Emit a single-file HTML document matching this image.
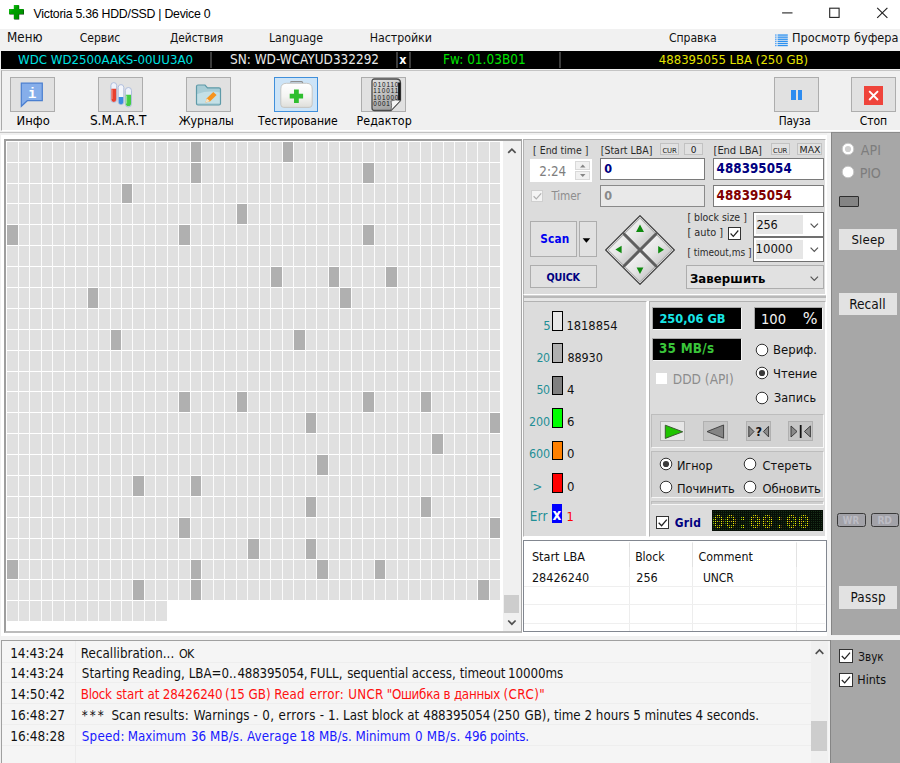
<!DOCTYPE html>
<html lang="ru"><head><meta charset="utf-8"><title>Victoria 5.36 HDD/SSD | Device 0</title>
<style>
html,body{margin:0;padding:0}
body{width:900px;height:763px;overflow:hidden;background:#f0f0f0;position:relative;font-family:'DejaVu Sans Condensed','DejaVu Sans',sans-serif;}
.b{position:absolute;box-sizing:border-box;display:block}
.t{position:absolute;white-space:pre;line-height:normal;margin:0;padding:0}
.btn{background:#e1e1e1;border:1px solid #adadad}
.pan{background:#dcdcdc;border:1px solid;border-color:#b2b2b2 #fff #fff #b2b2b2}
</style></head>
<body>
<div class="b" style="left:0px;top:0px;width:900px;height:29px;background:#fff;"></div>
<svg class="b" style="left:8px;top:4px;" width="18" height="17" viewBox="0 0 18 17"><defs><linearGradient id="gp" x1="0" y1="0" x2="1" y2="1"><stop offset="0" stop-color="#22d822"/><stop offset="0.35" stop-color="#00a000"/><stop offset="1" stop-color="#008a00"/></linearGradient></defs>
<path d="M6.200 1.500h5v4h4.800v5h-4.800v5h-5v-5h-4.800v-5h4.800z" fill="#062a06"/>
<path d="M5.800 1.100h5v4h4.800v5h-4.800v5h-5v-5h-4.800v-5h4.800z" fill="url(#gp)"/></svg>
<span class="t" style="font-family:'Liberation Sans',sans-serif;font-size:12.32px;color:#000;left:33.6px;top:6.6px;letter-spacing:-0.26px;">Victoria 5.36 HDD/SSD | Device 0</span>
<svg class="b" style="left:775px;top:0px;" width="125" height="29" viewBox="0 0 125 29"><path d="M7.1 12.9h10.4" stroke="#222" stroke-width="1.1" fill="none"/>
<rect x="54.7" y="8.2" width="9.4" height="9.2" stroke="#222" stroke-width="1.1" fill="none"/>
<path d="M102.2 7.9l10.2 10M112.4 7.9l-10.200 10" stroke="#222" stroke-width="1.15" fill="none"/></svg>
<div class="b" style="left:0px;top:29px;width:900px;height:21.6px;background:#f1f1f1;"></div>
<span class="t" style="font-family:'DejaVu Sans Condensed','DejaVu Sans',sans-serif;font-size:13.27px;color:#111;left:7px;top:30.4px;letter-spacing:0.02px;">Меню</span>
<span class="t" style="font-family:'DejaVu Sans Condensed','DejaVu Sans',sans-serif;font-size:12.12px;color:#111;left:79.7px;top:31.4px;letter-spacing:-0.03px;">Сервис</span>
<span class="t" style="font-family:'DejaVu Sans Condensed','DejaVu Sans',sans-serif;font-size:11.85px;color:#111;left:170px;top:31.4px;letter-spacing:-0.04px;">Действия</span>
<span class="t" style="font-family:'DejaVu Sans Condensed','DejaVu Sans',sans-serif;font-size:12.2px;color:#111;left:269px;top:31.4px;letter-spacing:-0.01px;">Language</span>
<span class="t" style="font-family:'DejaVu Sans Condensed','DejaVu Sans',sans-serif;font-size:12.28px;color:#111;left:369.7px;top:31.4px;letter-spacing:-0.01px;">Настройки</span>
<span class="t" style="font-family:'DejaVu Sans Condensed','DejaVu Sans',sans-serif;font-size:12.09px;color:#111;left:668.9px;top:31.4px;letter-spacing:-0.02px;">Справка</span>
<span class="t" style="font-family:'DejaVu Sans Condensed','DejaVu Sans',sans-serif;font-size:12.62px;color:#111;left:792px;top:30.4px;letter-spacing:0.01px;">Просмотр буфера</span>
<svg class="b" style="left:774.7px;top:34.2px;" width="13" height="13" viewBox="0 0 13 13"><rect x="0" y="0.4" width="1.6" height="1.3" fill="#5aa7f5"/><rect x="2.6" y="0.4" width="10.2" height="1.3" fill="#2b90f0"/><rect x="0" y="2.5" width="1.6" height="1.3" fill="#5aa7f5"/><rect x="2.6" y="2.5" width="10.2" height="1.3" fill="#2b90f0"/><rect x="0" y="4.6" width="1.6" height="1.3" fill="#5aa7f5"/><rect x="2.6" y="4.6" width="10.2" height="1.3" fill="#2b90f0"/><rect x="0" y="6.7" width="1.6" height="1.3" fill="#5aa7f5"/><rect x="2.6" y="6.7" width="10.2" height="1.3" fill="#2b90f0"/><rect x="0" y="8.8" width="1.6" height="1.3" fill="#5aa7f5"/><rect x="2.6" y="8.8" width="10.2" height="1.3" fill="#2b90f0"/><rect x="0" y="10.9" width="1.6" height="1.3" fill="#5aa7f5"/><rect x="2.6" y="10.9" width="10.2" height="1.3" fill="#2b90f0"/></svg>
<div class="b" style="left:1px;top:50.8px;width:899px;height:18.1px;background:#000;"></div>
<span class="t" style="font-family:'DejaVu Sans Condensed','DejaVu Sans',sans-serif;font-size:13.14px;color:#00e2e2;left:18px;top:51.7px;">WDC WD2500AAKS-00UU3A0</span>
<div class="b" style="left:209.9px;top:51.5px;width:1.7px;height:16.9px;background:#3c3c3c;"></div>
<div class="b" style="left:395.9px;top:51.5px;width:1.7px;height:16.9px;background:#3c3c3c;"></div>
<div class="b" style="left:409.2px;top:51.5px;width:1.7px;height:16.9px;background:#3c3c3c;"></div>
<div class="b" style="left:559.2px;top:51.5px;width:1.7px;height:16.9px;background:#3c3c3c;"></div>
<span class="t" style="font-family:'DejaVu Sans Condensed','DejaVu Sans',sans-serif;font-size:13.44px;color:#eaeaea;left:230px;top:51.7px;">SN: WD-WCAYUD332292</span>
<span class="t" style="font-family:'DejaVu Sans Condensed','DejaVu Sans',sans-serif;font-size:12.4px;color:#fff;font-weight:bold;left:399.35px;top:51.7px;">x</span>
<span class="t" style="font-family:'DejaVu Sans Condensed','DejaVu Sans',sans-serif;font-size:13.5px;color:#00e000;left:443px;top:50.7px;">Fw: 01.03B01</span>
<span class="t" style="font-family:'DejaVu Sans Condensed','DejaVu Sans',sans-serif;font-size:13.03px;color:#e4e400;left:658.8px;top:51.7px;">488395055 LBA (250 GB)</span>
<div class="b" style="left:1px;top:70.4px;width:899px;height:60.6px;background:#f0f0f0;border-left:1px solid #a9a9a9;border-top:1px solid #c4c4c4;border-bottom:1px solid #fff"></div>
<div class="b btn" style="left:10.3px;top:77.2px;width:44.7px;height:34.5px;"></div>
<div class="b btn" style="left:98.3px;top:77.2px;width:44.5px;height:34.5px;"></div>
<div class="b btn" style="left:186.3px;top:77.2px;width:44.7px;height:34.5px;"></div>
<div class="b btn" style="left:361.4px;top:77.2px;width:44.6px;height:34.5px;"></div>
<div class="b btn" style="left:773.8px;top:77.2px;width:44.9px;height:34.5px;"></div>
<div class="b btn" style="left:851.2px;top:77.2px;width:44.6px;height:34.5px;"></div>
<div class="b" style="left:273.6px;top:77.2px;width:44.8px;height:34.5px;background:#cde4f7;border:1.5px solid #3f8fdb"></div>
<span class="t" style="font-family:'DejaVu Sans Condensed','DejaVu Sans',sans-serif;font-size:12.85px;color:#000;left:16.5px;top:112.6px;letter-spacing:0.04px;">Инфо</span>
<span class="t" style="font-family:'DejaVu Sans Condensed','DejaVu Sans',sans-serif;font-size:13.47px;color:#000;left:90px;top:111.6px;letter-spacing:-0.07px;">S.M.A.R.T</span>
<span class="t" style="font-family:'DejaVu Sans Condensed','DejaVu Sans',sans-serif;font-size:12.28px;color:#000;left:178.7px;top:113.6px;letter-spacing:-0.03px;">Журналы</span>
<span class="t" style="font-family:'DejaVu Sans Condensed','DejaVu Sans',sans-serif;font-size:12.06px;color:#000;left:258px;top:113.6px;letter-spacing:-0.02px;">Тестирование</span>
<span class="t" style="font-family:'DejaVu Sans Condensed','DejaVu Sans',sans-serif;font-size:12.38px;color:#000;left:356.6px;top:113.6px;letter-spacing:-0.01px;">Редактор</span>
<span class="t" style="font-family:'DejaVu Sans Condensed','DejaVu Sans',sans-serif;font-size:11.72px;color:#000;left:778.7px;top:113.6px;letter-spacing:-0.16px;">Пауза</span>
<span class="t" style="font-family:'DejaVu Sans Condensed','DejaVu Sans',sans-serif;font-size:12.09px;color:#000;left:859.7px;top:113.6px;letter-spacing:-0.09px;">Стоп</span>
<svg class="b" style="left:20px;top:82px;" width="24" height="26" viewBox="0 0 24 26"><path d="M1.3 1.2h21v17.500h-15l-6 5.600z" fill="#86aeea" stroke="#4a7fd0" stroke-width="1.2"/></svg>
<span class="t" style="font-family:'Liberation Mono',monospace;font-size:14px;color:#fff;font-weight:bold;left:28px;top:86px;">i</span>
<svg class="b" style="left:109px;top:80px;" width="24" height="30" viewBox="0 0 24 30"><g stroke="#a9b9d9" stroke-width="0.900">
<rect x="1.900" y="2.600" width="5.800" height="19.800" rx="2.900" fill="#eef2fb"/>
<rect x="9.200" y="4.600" width="5.600" height="20.100" rx="2.800" fill="#f4f6fc"/>
<rect x="16.300" y="7.500" width="6.200" height="19.500" rx="3.100" fill="#eef2fb"/></g>
<path d="M2.400 8.700h4.800v10.800a2.400 2.400 0 0 1-4.800 0z" fill="#e8402f"/><path d="M3.100 9.500v9.500" stroke="#f59a8c" stroke-width="0.900"/>
<path d="M9.700 17.100h4.600v4.800a2.300 2.300 0 0 1-4.600 0z" fill="#3a8ce0"/>
<path d="M16.800 14.800h5.200v8.800a2.600 2.600 0 0 1-5.200 0z" fill="#44cc44"/><path d="M17.600 15.600v8" stroke="#a6eaa6" stroke-width="0.900"/></svg>
<svg class="b" style="left:195px;top:82px;" width="28" height="26" viewBox="0 0 28 26"><path d="M1.500 4.500q0-1.500 1.500-1.500h7l2.500 2.800h11.500q1.500 0 1.500 1.500v14.200q0 1.500-1.500 1.500h-21q-1.500 0-1.500-1.500z" fill="#a8cdd6" stroke="#5e9aa8" stroke-width="1.200"/>
<path d="M2.300 12q11-4 22.400-1.500v10.800h-22.400z" fill="#c4e0e6"/>
<path d="M10.500 20.500l1.300-4.300 6.500-6.300 3.300 3.200-6.600 6.300z" fill="#f7941d"/><path d="M10.500 20.500l1.300-4.300 3.200 3.100z" fill="#f4e3c8"/></svg>
<svg class="b" style="left:280px;top:80px;" width="33" height="29" viewBox="0 0 33 29"><defs><linearGradient id="kg" x1="0" y1="0" x2="0" y2="1"><stop offset="0" stop-color="#ffffff"/><stop offset="0.55" stop-color="#f4f4f2"/><stop offset="1" stop-color="#dededa"/></linearGradient></defs>
<path d="M10.500 2.600q0-1 1-1h10q1 0 1 1v1.200" stroke="#8e8e8e" stroke-width="1.300" fill="none"/>
<path d="M0.800 9q0-5.700 5.700-5.700h20q5.700 0 5.700 5.700v15.400q0 3-3 3h-25.400q-3 0-3-3z" fill="url(#kg)" stroke="#c2c2be" stroke-width="0.900"/>
<path d="M14 9.500h4.800v4.300h4.300v4.800h-4.300v4.300h-4.800v-4.300h-4.300v-4.800h4.300z" fill="#2fbe2f"/></svg>
<svg class="b" style="left:369px;top:78px;" width="33" height="34" viewBox="0 0 33 34"><defs><linearGradient id="hg" x1="0" y1="0" x2="0.300" y2="1"><stop offset="0" stop-color="#e2e2e2"/><stop offset="1" stop-color="#a4a4a4"/></linearGradient></defs>
<path d="M3 3.500q0-2.500 2.500-2.500h22q4 0 4 4v17.500l-9.500 10h-16.500q-2.500 0-2.500-2.500z" fill="url(#hg)" stroke="#4a4a4a" stroke-width="1.300"/>
<path d="M31.400 22.500q-5-1.500-9.400 0.500 1.200 4 0 9.400z" fill="#f6f6f6" stroke="#555" stroke-width="0.800"/>
<path d="M30.300 4.500v17.500" stroke="#111" stroke-width="2.400" fill="none"/>
<g font-family="Liberation Sans,sans-serif" font-size="6.300" fill="#111"><text x="4.300" y="8.600" textLength="25">010110</text><text x="4.300" y="15.100" textLength="25">110011</text><text x="4.300" y="21.600" textLength="25">101000</text><text x="4.300" y="28.100" textLength="16.500">0001</text></g></svg>
<div class="b" style="left:791.2px;top:90px;width:4.6px;height:10px;background:#2d8cf0;"></div>
<div class="b" style="left:798px;top:90px;width:4.4px;height:10px;background:#2d8cf0;"></div>
<svg class="b" style="left:864.2px;top:85.5px;" width="19.2" height="19.2" viewBox="0 0 19.2 19.2"><rect width="19.200" height="19.200" fill="#ef443b"/><path d="M5.200 5.200l8.800 8.800M14 5.200l-8.800 8.800" stroke="#fff" stroke-width="1.900" fill="none"/></svg>
<div class="b" style="left:0px;top:131.6px;width:831px;height:1.2px;background:#c2c2c2;"></div>
<div class="b" style="left:1px;top:135.3px;width:826px;height:500.3px;background:#fff;"></div>
<div class="b" style="left:4px;top:139px;width:518px;height:494px;background:#fff;border-style:solid;border-width:2px 1px 2px 2px;border-color:#9e9e9e #a6a6a6 #bcbcbc #9e9e9e"></div>
<svg class="b" style="left:7px;top:142px;shape-rendering:crispEdges;" width="494" height="480" viewBox="0 0 494 480"><rect x="0" y="0" width="494" height="480" fill="#fff"/><rect x="0" y="0" width="493" height="20" fill="#e0e0e0"/><rect x="184" y="0" width="10" height="20" fill="#b0b0b0"/><rect x="276" y="0" width="10" height="20" fill="#b0b0b0"/><rect x="0" y="21" width="493" height="20" fill="#e0e0e0"/><rect x="184" y="21" width="10" height="20" fill="#b0b0b0"/><rect x="356" y="21" width="11" height="20" fill="#b0b0b0"/><rect x="0" y="42" width="493" height="19" fill="#e0e0e0"/><rect x="115" y="42" width="10" height="19" fill="#b0b0b0"/><rect x="0" y="62" width="493" height="20" fill="#e0e0e0"/><rect x="230" y="62" width="10" height="20" fill="#b0b0b0"/><rect x="0" y="83" width="493" height="20" fill="#e0e0e0"/><rect x="0" y="83" width="11" height="20" fill="#b0b0b0"/><rect x="172" y="83" width="11" height="20" fill="#b0b0b0"/><rect x="356" y="83" width="11" height="20" fill="#b0b0b0"/><rect x="0" y="104" width="493" height="20" fill="#e0e0e0"/><rect x="0" y="125" width="493" height="20" fill="#e0e0e0"/><rect x="264" y="125" width="11" height="20" fill="#b0b0b0"/><rect x="322" y="125" width="10" height="20" fill="#b0b0b0"/><rect x="379" y="125" width="11" height="20" fill="#b0b0b0"/><rect x="0" y="146" width="493" height="20" fill="#e0e0e0"/><rect x="81" y="146" width="10" height="20" fill="#b0b0b0"/><rect x="333" y="146" width="11" height="20" fill="#b0b0b0"/><rect x="0" y="167" width="493" height="20" fill="#e0e0e0"/><rect x="0" y="188" width="493" height="20" fill="#e0e0e0"/><rect x="104" y="188" width="10" height="20" fill="#b0b0b0"/><rect x="287" y="188" width="11" height="20" fill="#b0b0b0"/><rect x="0" y="209" width="493" height="20" fill="#e0e0e0"/><rect x="0" y="230" width="493" height="19" fill="#e0e0e0"/><rect x="0" y="250" width="493" height="20" fill="#e0e0e0"/><rect x="172" y="250" width="11" height="20" fill="#b0b0b0"/><rect x="230" y="250" width="10" height="20" fill="#b0b0b0"/><rect x="356" y="250" width="11" height="20" fill="#b0b0b0"/><rect x="414" y="250" width="10" height="20" fill="#b0b0b0"/><rect x="0" y="271" width="493" height="20" fill="#e0e0e0"/><rect x="299" y="271" width="10" height="20" fill="#b0b0b0"/><rect x="483" y="271" width="10" height="20" fill="#b0b0b0"/><rect x="0" y="292" width="493" height="20" fill="#e0e0e0"/><rect x="425" y="292" width="11" height="20" fill="#b0b0b0"/><rect x="0" y="313" width="493" height="20" fill="#e0e0e0"/><rect x="310" y="313" width="11" height="20" fill="#b0b0b0"/><rect x="0" y="334" width="493" height="20" fill="#e0e0e0"/><rect x="126" y="334" width="11" height="20" fill="#b0b0b0"/><rect x="184" y="334" width="10" height="20" fill="#b0b0b0"/><rect x="0" y="355" width="493" height="20" fill="#e0e0e0"/><rect x="299" y="355" width="10" height="20" fill="#b0b0b0"/><rect x="414" y="355" width="10" height="20" fill="#b0b0b0"/><rect x="0" y="376" width="493" height="20" fill="#e0e0e0"/><rect x="172" y="376" width="11" height="20" fill="#b0b0b0"/><rect x="483" y="376" width="10" height="20" fill="#b0b0b0"/><rect x="0" y="397" width="493" height="20" fill="#e0e0e0"/><rect x="241" y="397" width="11" height="20" fill="#b0b0b0"/><rect x="299" y="397" width="10" height="20" fill="#b0b0b0"/><rect x="0" y="418" width="493" height="19" fill="#e0e0e0"/><rect x="0" y="418" width="11" height="19" fill="#b0b0b0"/><rect x="184" y="418" width="10" height="19" fill="#b0b0b0"/><rect x="310" y="418" width="11" height="19" fill="#b0b0b0"/><rect x="368" y="418" width="10" height="19" fill="#b0b0b0"/><rect x="0" y="438" width="493" height="20" fill="#e0e0e0"/><rect x="126" y="438" width="11" height="20" fill="#b0b0b0"/><rect x="184" y="438" width="10" height="20" fill="#b0b0b0"/><rect x="471" y="438" width="11" height="20" fill="#b0b0b0"/><rect x="0" y="459" width="160" height="20" fill="#e0e0e0"/><path d="M11.5 0v479M22.5 0v479M34.5 0v479M45.5 0v479M57.5 0v479M68.5 0v479M80.5 0v479M91.5 0v479M103.5 0v479M114.5 0v479M125.5 0v479M137.5 0v479M148.5 0v479M160.5 0v458M171.5 0v458M183.5 0v458M194.5 0v458M206.5 0v458M217.5 0v458M229.5 0v458M240.5 0v458M252.5 0v458M263.5 0v458M275.5 0v458M286.5 0v458M298.5 0v458M309.5 0v458M321.5 0v458M332.5 0v458M344.5 0v458M355.5 0v458M367.5 0v458M378.5 0v458M390.5 0v458M401.5 0v458M413.5 0v458M424.5 0v458M436.5 0v458M447.5 0v458M459.5 0v458M470.5 0v458M482.5 0v458" stroke="#fbfbfb" stroke-width="1" fill="none"/></svg>
<div class="b" style="left:502.9px;top:141px;width:18px;height:490px;background:#f0f0f0;"></div>
<div class="b" style="left:503.6px;top:595px;width:15.6px;height:17.7px;background:#cdcdcd;"></div>
<svg class="b" style="left:502.9px;top:142.3px;" width="18" height="18" viewBox="0 0 18 18"><path d="M5.200 10.800l3.700-3.700 3.700 3.700" stroke="#505050" stroke-width="1.700" fill="none"/></svg>
<svg class="b" style="left:502.9px;top:613.6px;" width="18" height="18" viewBox="0 0 18 18"><path d="M5.200 6.500l3.700 3.700 3.700-3.700" stroke="#505050" stroke-width="1.700" fill="none"/></svg>
<div class="b pan" style="left:522.9px;top:139px;width:303.5px;height:156px;"></div>
<div class="b" style="left:522.9px;top:295px;width:303.5px;height:5.6px;background:#d2d2d2;background-image:linear-gradient(180deg,#d2d2d2 0,#d2d2d2 1.500px,#b9b9b9 1.500px,#b9b9b9 3.500px,#e6e6e6 3.500px,#e6e6e6 100%);border-left:1px solid #b2b2b2"></div>
<span class="t" style="font-family:'DejaVu Sans Condensed','DejaVu Sans',sans-serif;font-size:10.44px;color:#2a2a2a;left:533.1px;top:143.6px;letter-spacing:-0.01px;">[ End time ]</span>
<span class="t" style="font-family:'DejaVu Sans Condensed','DejaVu Sans',sans-serif;font-size:10.52px;color:#2a2a2a;left:600.7px;top:143.6px;">[Start LBA]</span>
<span class="t" style="font-family:'DejaVu Sans Condensed','DejaVu Sans',sans-serif;font-size:11.12px;color:#2a2a2a;left:713.6px;top:143.6px;letter-spacing:-0.1px;">[End LBA]</span>
<div class="b" style="left:660.2px;top:142.5px;width:19px;height:12.7px;background:#e1e1e1;border:1px solid #c2c2c2"></div>
<span class="t" style="font-family:'DejaVu Sans',sans-serif;font-size:6.9px;color:#222;left:662.4px;top:146.8px;letter-spacing:-0.13px;">CUR</span>
<div class="b" style="left:684.2px;top:142.5px;width:19.2px;height:12.7px;background:#e1e1e1;border:1px solid #c2c2c2"></div>
<span class="t" style="font-family:'DejaVu Sans',sans-serif;font-size:9px;color:#222;left:690.8px;top:144.8px;">0</span>
<div class="b" style="left:770.8px;top:142.5px;width:18.8px;height:12.7px;background:#e1e1e1;border:1px solid #c2c2c2"></div>
<span class="t" style="font-family:'DejaVu Sans',sans-serif;font-size:6.9px;color:#222;left:773px;top:146.8px;letter-spacing:-0.13px;">CUR</span>
<div class="b" style="left:797.1px;top:142.5px;width:25.3px;height:12.7px;background:#e1e1e1;border:1px solid #c2c2c2"></div>
<span class="t" style="font-family:'DejaVu Sans',sans-serif;font-size:9.41px;color:#222;left:799.6px;top:143.8px;letter-spacing:-0.08px;">MAX</span>
<div class="b" style="left:530.1px;top:158.6px;width:61.7px;height:23.2px;background:#fff;"></div>
<span class="t" style="font-family:'DejaVu Sans Condensed','DejaVu Sans',sans-serif;font-size:13.36px;color:#7e7e7e;left:539.3px;top:163.6px;letter-spacing:-0.01px;">2:24</span>
<div class="b" style="left:574.5px;top:160.8px;width:15.5px;height:9.6px;background:#f0f0f0;border:1px solid #d9d9d9"></div>
<div class="b" style="left:574.5px;top:170.8px;width:15.5px;height:9.6px;background:#f0f0f0;border:1px solid #d9d9d9"></div>
<svg class="b" style="left:574.5px;top:160.8px;" width="15.5" height="19.6" viewBox="0 0 15.5 19.6"><path d="M5 6.600l2.750-3 2.750 3zM5 13l2.750 3 2.750-3z" fill="#858585"/></svg>
<div class="b" style="left:530.8px;top:189.6px;width:12.5px;height:12.2px;background:#f4f4f4;border:1px solid #cfcfcf"></div>
<svg class="b" style="left:530.8px;top:189.6px;" width="12.5" height="12.2" viewBox="0 0 12.5 12.2"><path d="M2.600 6.300l2.700 2.700 4.900-5.600" stroke="#b0b0b0" stroke-width="1.200" fill="none"/></svg>
<span class="t" style="font-family:'DejaVu Sans Condensed','DejaVu Sans',sans-serif;font-size:11.72px;color:#8e8e8e;left:551.4px;top:189.4px;letter-spacing:-0.17px;">Timer</span>
<div class="b" style="left:600.3px;top:158.2px;width:104.5px;height:22.2px;background:#fff;border:1.5px solid #7a7a7a"></div>
<span class="t" style="font-family:'DejaVu Sans Condensed','DejaVu Sans',sans-serif;font-size:12.5px;color:#000080;font-weight:bold;left:604.15px;top:161.2px;">0</span>
<div class="b" style="left:600.3px;top:185.2px;width:104.5px;height:22px;background:#e9e9e9;border:1.5px solid #8a8a8a"></div>
<span class="t" style="font-family:'DejaVu Sans Condensed','DejaVu Sans',sans-serif;font-size:12.5px;color:#8a8a8a;font-weight:bold;left:604.15px;top:188.3px;">0</span>
<div class="b" style="left:713.2px;top:158.2px;width:110.6px;height:22.2px;background:#fff;border:1.5px solid #7a7a7a"></div>
<span class="t" style="font-family:'DejaVu Sans Condensed','DejaVu Sans',sans-serif;font-size:13.24px;color:#000080;font-weight:bold;left:716.6px;top:161.2px;letter-spacing:0.07px;">488395054</span>
<div class="b" style="left:713.2px;top:185.2px;width:110.6px;height:22px;background:#fff;border:1.5px solid #7a7a7a"></div>
<span class="t" style="font-family:'DejaVu Sans Condensed','DejaVu Sans',sans-serif;font-size:13.24px;color:#800000;font-weight:bold;left:716.6px;top:188.3px;letter-spacing:0.07px;">488395054</span>
<div class="b btn" style="left:530.4px;top:220.6px;width:46.3px;height:36.8px;"></div>
<span class="t" style="font-family:'DejaVu Sans Condensed','DejaVu Sans',sans-serif;font-size:11.74px;color:#0000f0;font-weight:bold;left:540.2px;top:231.7px;letter-spacing:0.17px;">Scan</span>
<div class="b btn" style="left:578.8px;top:220.6px;width:17.8px;height:36.8px;"></div>
<svg class="b" style="left:578.8px;top:220.6px;" width="17.8" height="36.8" viewBox="0 0 17.8 36.8"><path d="M3.600 17.300h7.600l-3.800 4.400z" fill="#000"/></svg>
<div class="b btn" style="left:530.4px;top:265.4px;width:66.2px;height:22.8px;"></div>
<span class="t" style="font-family:'DejaVu Sans Condensed','DejaVu Sans',sans-serif;font-size:10.69px;color:#000080;font-weight:bold;left:546.4px;top:270.6px;letter-spacing:-0.1px;">QUICK</span>
<svg class="b" style="left:604.9px;top:215.4px;" width="70" height="70" viewBox="0 0 70 70"><defs><linearGradient id="dg" x1="0" y1="0" x2="1" y2="1"><stop offset="0" stop-color="#fafafa"/><stop offset="0.5" stop-color="#e4e4e4"/><stop offset="1" stop-color="#b8b8b8"/></linearGradient></defs>
<path d="M35 0.700l34.300 34.300-34.300 34.300-34.300-34.300z" fill="#f2f2f2" stroke="#454545" stroke-width="1.300"/>
<g stroke="#8a8a8a" stroke-width="0.800" fill="url(#dg)">
<path d="M35 3.200l15 15-15 15-15-15z"/><path d="M18.200 20l15 15-15 15-15-15z"/><path d="M51.800 20l15 15-15 15-15-15z"/><path d="M35 36.800l15 15-15 15-15-15z"/></g>
<path d="M18.200 18.200l33.600 33.600M51.800 18.200l-33.600 33.600" stroke="#5e5e5e" stroke-width="2.600" fill="none"/>
<g fill="#0f8a0f"><path d="M35 9.600l4 7.500h-8z"/><path d="M35 59l3.400-6.600h-6.800z"/><path d="M10.400 34.500l6.200-3.800v7.600z"/><path d="M59 34.800l-5.800-3.700v7.400z"/></g></svg>
<span class="t" style="font-family:'DejaVu Sans Condensed','DejaVu Sans',sans-serif;font-size:10.45px;color:#2a2a2a;left:687.4px;top:211.4px;">[ block size ]</span>
<span class="t" style="font-family:'DejaVu Sans Condensed','DejaVu Sans',sans-serif;font-size:10.84px;color:#2a2a2a;left:687.4px;top:226.1px;letter-spacing:0.01px;">[ auto ]</span>
<span class="t" style="font-family:'DejaVu Sans Condensed','DejaVu Sans',sans-serif;font-size:10.02px;color:#2a2a2a;left:687.4px;top:246.7px;letter-spacing:-0.01px;">[ timeout,ms ]</span>
<div class="b" style="left:728.3px;top:227.2px;width:12.6px;height:12.6px;background:#fff;border:1px solid #333"></div>
<svg class="b" style="left:728.3px;top:227.2px;" width="12.6" height="12.6" viewBox="0 0 12.6 12.6"><path d="M2.600 6.500l2.700 2.800 5-5.800" stroke="#222" stroke-width="1.200" fill="none"/></svg>
<div class="b" style="left:753.2px;top:212.4px;width:70.6px;height:24.3px;background:#fff;border:1px solid #707070"></div>
<div class="b" style="left:755.7px;top:214.8px;width:47.3px;height:19.1px;background:#e6e6e6;"></div>
<span class="t" style="font-family:'DejaVu Sans Condensed','DejaVu Sans',sans-serif;font-size:12.6px;color:#111;left:756.6px;top:216.5px;letter-spacing:-0.21px;">256</span>
<div class="b" style="left:753.2px;top:237.4px;width:70.6px;height:24.2px;background:#fff;border:1px solid #707070"></div>
<div class="b" style="left:755.7px;top:239.8px;width:47.3px;height:19.1px;background:#e6e6e6;"></div>
<span class="t" style="font-family:'DejaVu Sans Condensed','DejaVu Sans',sans-serif;font-size:13.05px;color:#111;left:755.6px;top:241.4px;letter-spacing:-0.04px;">10000</span>
<div class="b btn" style="left:686px;top:265.4px;width:137.8px;height:24px;"></div>
<span class="t" style="font-family:'DejaVu Sans Condensed','DejaVu Sans',sans-serif;font-size:13.03px;color:#000;font-weight:bold;left:689.9px;top:270.9px;letter-spacing:0.1px;">Завершить</span>
<svg class="b" style="left:810px;top:222.5px;" width="8.6" height="5.4" viewBox="0 0 8.6 5.4"><path d="M0.600 0.700l3.700 3.700 3.700-3.700" stroke="#555" stroke-width="1.200" fill="none"/></svg>
<svg class="b" style="left:810px;top:247.4px;" width="8.6" height="5.4" viewBox="0 0 8.6 5.4"><path d="M0.600 0.700l3.700 3.700 3.700-3.700" stroke="#555" stroke-width="1.200" fill="none"/></svg>
<svg class="b" style="left:810px;top:275.6px;" width="8.6" height="5.4" viewBox="0 0 8.6 5.4"><path d="M0.600 0.700l3.700 3.700 3.700-3.700" stroke="#555" stroke-width="1.200" fill="none"/></svg>
<div class="b pan" style="left:522.9px;top:300.6px;width:124.3px;height:236.6px;"></div>
<div class="b" style="left:552.1px;top:310.9px;width:11px;height:19.7px;background:#e8e8e8;border:1px solid #000"></div>
<span class="t" style="font-family:'DejaVu Sans Condensed','DejaVu Sans',sans-serif;font-size:13px;color:#1f8f96;left:543.25px;top:317.6px;">5</span>
<span class="t" style="font-family:'DejaVu Sans Condensed','DejaVu Sans',sans-serif;font-size:12.81px;color:#111;left:566.4px;top:317.6px;letter-spacing:-0.01px;">1818854</span>
<div class="b" style="left:552.1px;top:343.3px;width:11px;height:19.7px;background:#b0b0b0;border:1px solid #000"></div>
<span class="t" style="font-family:'DejaVu Sans Condensed','DejaVu Sans',sans-serif;font-size:12.24px;color:#1f8f96;left:536.4px;top:350.9px;letter-spacing:-0.4px;">20</span>
<span class="t" style="font-family:'DejaVu Sans Condensed','DejaVu Sans',sans-serif;font-size:12.48px;color:#111;left:567.4px;top:349.9px;letter-spacing:-0.06px;">88930</span>
<div class="b" style="left:552.1px;top:375.7px;width:11px;height:19.7px;background:#808080;border:1px solid #000"></div>
<span class="t" style="font-family:'DejaVu Sans Condensed','DejaVu Sans',sans-serif;font-size:12.24px;color:#1f8f96;left:536.4px;top:383.2px;letter-spacing:-0.4px;">50</span>
<span class="t" style="font-family:'DejaVu Sans Condensed','DejaVu Sans',sans-serif;font-size:13px;color:#111;left:566.9px;top:382.2px;">4</span>
<div class="b" style="left:552.1px;top:408.1px;width:11px;height:19.7px;background:#00ff00;border:1px solid #000"></div>
<span class="t" style="font-family:'DejaVu Sans Condensed','DejaVu Sans',sans-serif;font-size:12.48px;color:#1f8f96;left:529px;top:413.9px;letter-spacing:-0.14px;">200</span>
<span class="t" style="font-family:'DejaVu Sans Condensed','DejaVu Sans',sans-serif;font-size:13px;color:#111;left:567px;top:413.9px;">6</span>
<div class="b" style="left:552.1px;top:440.5px;width:11px;height:19.7px;background:#ff8000;border:1px solid #000"></div>
<span class="t" style="font-family:'DejaVu Sans Condensed','DejaVu Sans',sans-serif;font-size:12.48px;color:#1f8f96;left:529px;top:446.2px;letter-spacing:-0.14px;">600</span>
<span class="t" style="font-family:'DejaVu Sans Condensed','DejaVu Sans',sans-serif;font-size:13px;color:#111;left:567px;top:446.2px;">0</span>
<div class="b" style="left:552.1px;top:472.9px;width:11px;height:19.7px;background:#ff0000;border:1px solid #000"></div>
<span class="t" style="font-family:'DejaVu Sans Condensed','DejaVu Sans',sans-serif;font-size:13px;color:#2f8f96;left:532.55px;top:478.5px;">&gt;</span>
<span class="t" style="font-family:'DejaVu Sans Condensed','DejaVu Sans',sans-serif;font-size:13px;color:#111;left:567px;top:478.5px;">0</span>
<span class="t" style="font-family:'DejaVu Sans Condensed','DejaVu Sans',sans-serif;font-size:13.45px;color:#1f8f96;left:529.8px;top:508.6px;letter-spacing:0.12px;">Err</span>
<div class="b" style="left:552px;top:504px;width:10.2px;height:18.6px;background:#0000ff;"></div>
<span class="t" style="font-family:'DejaVu Sans Condensed','DejaVu Sans',sans-serif;font-size:15.2px;color:#fff;font-weight:bold;left:552.6px;top:506px;">x</span>
<span class="t" style="font-family:'DejaVu Sans Condensed','DejaVu Sans',sans-serif;font-size:12.8px;color:#ff0000;left:566.45px;top:508.6px;">1</span>
<div class="b pan" style="left:648.5px;top:300.6px;width:177.9px;height:236.6px;"></div>
<div class="b" style="left:651.8px;top:307.3px;width:90.4px;height:22.4px;background:#000;border:1.300px solid;border-color:#a8a8a8 #f4f4f4 #f4f4f4 #a8a8a8"></div>
<span class="t" style="font-family:'DejaVu Sans Condensed','DejaVu Sans',sans-serif;font-size:12.69px;color:#19e6e6;font-weight:bold;left:659.4px;top:310.7px;letter-spacing:0.01px;">250,06 GB</span>
<div class="b" style="left:753.7px;top:307.3px;width:69.1px;height:22.4px;background:#000;border:1.300px solid;border-color:#a8a8a8 #f4f4f4 #f4f4f4 #a8a8a8"></div>
<span class="t" style="font-family:'DejaVu Sans Condensed','DejaVu Sans',sans-serif;font-size:14.6px;color:#f2f2f2;left:761px;top:310.2px;">100</span>
<span class="t" style="font-family:'DejaVu Sans',sans-serif;font-size:15.6px;color:#f2f2f2;left:802.7px;top:310.2px;">%</span>
<div class="b" style="left:651.8px;top:338.3px;width:90.4px;height:22.7px;background:#000;border:1.300px solid;border-color:#a8a8a8 #f4f4f4 #f4f4f4 #a8a8a8"></div>
<span class="t" style="font-family:'DejaVu Sans Condensed','DejaVu Sans',sans-serif;font-size:13.38px;color:#3ac43a;font-weight:bold;left:659px;top:341.3px;letter-spacing:0.24px;">35 MB/s</span>
<div class="b" style="left:655.8px;top:372.8px;width:11.6px;height:11.6px;background:#fff;"></div>
<span class="t" style="font-family:'DejaVu Sans Condensed','DejaVu Sans',sans-serif;font-size:13.56px;color:#8c8c8c;left:672.8px;top:370.9px;letter-spacing:0.01px;">DDD (API)</span>
<svg class="b" style="left:754.8px;top:342.5px;" width="14" height="14" viewBox="0 0 14 14"><circle cx="7" cy="7" r="5.800" fill="#fff" stroke="#333" stroke-width="1"/></svg>
<span class="t" style="font-family:'DejaVu Sans Condensed','DejaVu Sans',sans-serif;font-size:13.02px;color:#111;left:773px;top:342.4px;">Вериф.</span>
<svg class="b" style="left:754.8px;top:366.4px;" width="14" height="14" viewBox="0 0 14 14"><circle cx="7" cy="7" r="5.800" fill="#fff" stroke="#333" stroke-width="1"/><circle cx="7" cy="7" r="3.100" fill="#3a3a3a"/></svg>
<span class="t" style="font-family:'DejaVu Sans Condensed','DejaVu Sans',sans-serif;font-size:12.89px;color:#111;left:773px;top:366.2px;">Чтение</span>
<svg class="b" style="left:754.8px;top:390.7px;" width="14" height="14" viewBox="0 0 14 14"><circle cx="7" cy="7" r="5.800" fill="#fff" stroke="#333" stroke-width="1"/></svg>
<span class="t" style="font-family:'DejaVu Sans Condensed','DejaVu Sans',sans-serif;font-size:12.48px;color:#111;left:774px;top:390.3px;letter-spacing:0.15px;">Запись</span>
<div class="b" style="left:651px;top:414.4px;width:173.2px;height:33.2px;background:#d3d3d3;border:1px solid;border-color:#bdbdbd #f6f6f6 #f6f6f6 #bdbdbd"></div>
<div class="b" style="left:660px;top:420.5px;width:25.4px;height:20.7px;background:#e6e6e6;border:1px solid #b4b4b4"></div>
<div class="b" style="left:702.9px;top:420.5px;width:25.3px;height:20.7px;background:#c6c6c6;border:1px solid #b0b0b0"></div>
<div class="b" style="left:746.2px;top:420.5px;width:25.3px;height:20.7px;background:#c6c6c6;border:1px solid #b0b0b0"></div>
<div class="b" style="left:787.8px;top:420.5px;width:25.3px;height:20.7px;background:#c6c6c6;border:1px solid #b0b0b0"></div>
<svg class="b" style="left:660px;top:420.5px;" width="25.4" height="20.7" viewBox="0 0 25.4 20.7"><path d="M5.300 4.200v13.200l17.400-6.600z" fill="#1fc400" stroke="#3a5a30" stroke-width="1"/></svg>
<svg class="b" style="left:702.9px;top:420.5px;" width="25.3" height="20.7" viewBox="0 0 25.3 20.7"><path d="M20.600 4v13.200l-16.600-6.600z" fill="#858585" stroke="#444" stroke-width="1"/></svg>
<svg class="b" style="left:746.2px;top:420.5px;" width="25.3" height="20.7" viewBox="0 0 25.3 20.7"><path d="M2.800 5.300v10.600l5.200-5.300z" fill="#8a8a8a" stroke="#333" stroke-width="0.900"/><path d="M22.600 5.300v10.600l-5.200-5.300z" fill="#8a8a8a" stroke="#333" stroke-width="0.900"/></svg>
<span class="t" style="font-family:'DejaVu Sans Condensed','DejaVu Sans',sans-serif;font-size:12.5px;color:#111;font-weight:bold;left:755.5px;top:423.6px;">?</span>
<svg class="b" style="left:787.8px;top:420.5px;" width="25.3" height="20.7" viewBox="0 0 25.3 20.7"><path d="M3 5v11l6-5.500z" fill="#8a8a8a" stroke="#333" stroke-width="0.900"/><path d="M22.400 5v11l-6-5.500z" fill="#8a8a8a" stroke="#333" stroke-width="0.900"/><path d="M12.700 4v13" stroke="#111" stroke-width="1.800"/></svg>
<div class="b" style="left:651px;top:451.3px;width:173.2px;height:47px;background:#d3d3d3;border:1px solid;border-color:#bdbdbd #f6f6f6 #f6f6f6 #bdbdbd"></div>
<svg class="b" style="left:658.5px;top:457px;" width="14" height="14" viewBox="0 0 14 14"><circle cx="7" cy="7" r="5.800" fill="#fff" stroke="#333" stroke-width="1"/><circle cx="7" cy="7" r="3.100" fill="#3a3a3a"/></svg>
<span class="t" style="font-family:'DejaVu Sans Condensed','DejaVu Sans',sans-serif;font-size:12.53px;color:#111;left:677px;top:457.7px;letter-spacing:-0.05px;">Игнор</span>
<svg class="b" style="left:742.7px;top:457px;" width="14" height="14" viewBox="0 0 14 14"><circle cx="7" cy="7" r="5.800" fill="#fff" stroke="#333" stroke-width="1"/></svg>
<span class="t" style="font-family:'DejaVu Sans Condensed','DejaVu Sans',sans-serif;font-size:12.59px;color:#111;left:762.4px;top:457.7px;letter-spacing:0.13px;">Стереть</span>
<svg class="b" style="left:658.5px;top:480.2px;" width="14" height="14" viewBox="0 0 14 14"><circle cx="7" cy="7" r="5.800" fill="#fff" stroke="#333" stroke-width="1"/></svg>
<span class="t" style="font-family:'DejaVu Sans Condensed','DejaVu Sans',sans-serif;font-size:12.66px;color:#111;left:677px;top:480.9px;letter-spacing:-0.02px;">Починить</span>
<svg class="b" style="left:742.7px;top:480.2px;" width="14" height="14" viewBox="0 0 14 14"><circle cx="7" cy="7" r="5.800" fill="#fff" stroke="#333" stroke-width="1"/></svg>
<span class="t" style="font-family:'DejaVu Sans Condensed','DejaVu Sans',sans-serif;font-size:12.82px;color:#111;left:762.4px;top:480.9px;letter-spacing:-0.01px;">Обновить</span>
<div class="b" style="left:651px;top:501.3px;width:173.2px;height:3.7px;background:#cfcfcf;border:1px solid;border-color:#bdbdbd #f6f6f6 #f6f6f6 #bdbdbd"></div>
<div class="b" style="left:655.8px;top:515.7px;width:13.2px;height:13.2px;background:#fff;border:1px solid #333"></div>
<svg class="b" style="left:655.8px;top:515.7px;" width="13.2" height="13.2" viewBox="0 0 13.2 13.2"><path d="M2.700 6.800l2.900 2.900 5.200-6" stroke="#222" stroke-width="1.300" fill="none"/></svg>
<span class="t" style="font-family:'DejaVu Sans Condensed','DejaVu Sans',sans-serif;font-size:11.92px;color:#000080;font-weight:bold;left:674.8px;top:516.3px;letter-spacing:0.22px;">Grid</span>
<div class="b" style="left:712px;top:510px;width:111px;height:21px;background:#060e06;background-image:radial-gradient(circle at 1.500px 1.500px,#183018 0.500px,rgba(0,0,0,0) 0.800px);background-size:2px 2px"></div>
<span class="t" style="font-family:'Liberation Mono',monospace;font-size:20.6px;color:#f0f000;font-weight:bold;left:712px;top:510.9px;letter-spacing:-0.13px;">00:00:00</span>
<div class="b" style="left:712px;top:510px;width:111px;height:21px;background-image:repeating-linear-gradient(90deg,rgba(6,14,6,0.940) 0,rgba(6,14,6,0.940) 1px,rgba(0,0,0,0) 1px,rgba(0,0,0,0) 2px),repeating-linear-gradient(180deg,rgba(6,14,6,0.940) 0,rgba(6,14,6,0.940) 1px,rgba(0,0,0,0) 1px,rgba(0,0,0,0) 2px)"></div>
<div class="b" style="left:523.2px;top:540.3px;width:303.5px;height:91.9px;background:#fff;border:1px solid #828790"></div>
<div class="b" style="left:629.1px;top:541.6px;width:1px;height:89.4px;background:#ededed;"></div>
<div class="b" style="left:629.1px;top:543px;width:1px;height:24px;background:#e2e2e2;"></div>
<div class="b" style="left:691.7px;top:541.6px;width:1px;height:89.4px;background:#ededed;"></div>
<div class="b" style="left:691.7px;top:543px;width:1px;height:24px;background:#e2e2e2;"></div>
<div class="b" style="left:795.9px;top:541.6px;width:1px;height:89.4px;background:#ededed;"></div>
<div class="b" style="left:795.9px;top:543px;width:1px;height:24px;background:#e2e2e2;"></div>
<div class="b" style="left:523.6px;top:585.9px;width:301.9px;height:1px;background:#efefef;"></div>
<div class="b" style="left:523.6px;top:604.4px;width:301.9px;height:1px;background:#efefef;"></div>
<div class="b" style="left:523.6px;top:622.9px;width:301.9px;height:1px;background:#efefef;"></div>
<span class="t" style="font-family:'DejaVu Sans Condensed','DejaVu Sans',sans-serif;font-size:12.57px;color:#111;left:531.9px;top:548.6px;letter-spacing:0.01px;">Start LBA</span>
<span class="t" style="font-family:'DejaVu Sans Condensed','DejaVu Sans',sans-serif;font-size:12.12px;color:#111;left:635.2px;top:549.6px;letter-spacing:-0.04px;">Block</span>
<span class="t" style="font-family:'DejaVu Sans Condensed','DejaVu Sans',sans-serif;font-size:12.3px;color:#111;left:698.6px;top:549.6px;letter-spacing:-0.01px;">Comment</span>
<span class="t" style="font-family:'DejaVu Sans Condensed','DejaVu Sans',sans-serif;font-size:12.53px;color:#111;left:531.9px;top:570.4px;letter-spacing:0.01px;">28426240</span>
<span class="t" style="font-family:'DejaVu Sans Condensed','DejaVu Sans',sans-serif;font-size:12.55px;color:#111;left:636.2px;top:570.4px;letter-spacing:0.02px;">256</span>
<span class="t" style="font-family:'DejaVu Sans Condensed','DejaVu Sans',sans-serif;font-size:12.04px;color:#111;left:702.9px;top:571.4px;letter-spacing:-0.09px;">UNCR</span>
<div class="b" style="left:827px;top:133px;width:4px;height:503px;background:#f4f4f4;"></div>
<div class="b" style="left:830.6px;top:132.3px;width:69.4px;height:502.5px;background:#a7a7a7;border-left:1.200px solid #858585;border-top:1.500px solid #8c8c8c"></div>
<svg class="b" style="left:841.3px;top:142.4px;" width="14" height="14" viewBox="0 0 14 14"><circle cx="7" cy="7" r="5.800" fill="#fff" stroke="#c4c4c4" stroke-width="1"/><circle cx="7" cy="7" r="3.100" fill="#d0d0d0"/></svg>
<span class="t" style="font-family:'DejaVu Sans Condensed','DejaVu Sans',sans-serif;font-size:14.1px;color:#7d7d7d;left:860.7px;top:142.1px;letter-spacing:0.09px;">API</span>
<svg class="b" style="left:841.3px;top:165.4px;" width="14" height="14" viewBox="0 0 14 14"><circle cx="7" cy="7" r="5.800" fill="#fff" stroke="#c4c4c4" stroke-width="1"/></svg>
<span class="t" style="font-family:'DejaVu Sans Condensed','DejaVu Sans',sans-serif;font-size:14.23px;color:#7d7d7d;left:859.7px;top:165.1px;letter-spacing:-0.19px;">PIO</span>
<div class="b" style="left:839.1px;top:196.2px;width:19.8px;height:10.6px;background:#848484;border:1.500px solid #2e2e2e;border-radius:1px"></div>
<div class="b" style="left:838.9px;top:228.8px;width:58.4px;height:21.6px;background:#e2e2e2;"></div>
<span class="t" style="font-family:'DejaVu Sans Condensed','DejaVu Sans',sans-serif;font-size:13.09px;color:#111;left:851.4px;top:232.1px;letter-spacing:0.19px;">Sleep</span>
<div class="b" style="left:838.9px;top:293.1px;width:58.4px;height:21.7px;background:#e2e2e2;"></div>
<span class="t" style="font-family:'DejaVu Sans Condensed','DejaVu Sans',sans-serif;font-size:13.58px;color:#111;left:849.2px;top:295.5px;">Recall</span>
<div class="b" style="left:838.9px;top:586.4px;width:58.4px;height:22.2px;background:#e2e2e2;"></div>
<span class="t" style="font-family:'DejaVu Sans Condensed','DejaVu Sans',sans-serif;font-size:13.37px;color:#111;left:850.4px;top:589.7px;letter-spacing:0.24px;">Passp</span>
<div class="b" style="left:837.2px;top:513.2px;width:28.4px;height:13.4px;background:#a2a2a8;border:1.500px solid #3a3a3a;border-radius:2.500px"></div>
<span class="t" style="font-family:'DejaVu Sans Condensed','DejaVu Sans',sans-serif;font-size:9.64px;color:#bcbcc4;font-weight:bold;left:842.8px;top:515.1px;letter-spacing:0.05px;">WR</span>
<div class="b" style="left:871.2px;top:513.2px;width:27.6px;height:13.4px;background:#a2a2a8;border:1.500px solid #3a3a3a;border-radius:2.500px"></div>
<span class="t" style="font-family:'DejaVu Sans Condensed','DejaVu Sans',sans-serif;font-size:10.27px;color:#bcbcc4;font-weight:bold;left:877.6px;top:514.1px;letter-spacing:-0.51px;">RD</span>
<div class="b" style="left:0px;top:635.6px;width:900px;height:4.6px;background:#f2f2f2;"></div>
<div class="b" style="left:1px;top:640.2px;width:828.6px;height:122.8px;background:#f5f5f5;border-left:1px solid #a0a0a0;border-top:1px solid #a0a0a0"></div>
<div class="b" style="left:2px;top:661.5px;width:808.6px;height:1px;background:#eeeeee;"></div>
<div class="b" style="left:2px;top:682.4px;width:808.6px;height:1px;background:#eeeeee;"></div>
<div class="b" style="left:2px;top:703.3px;width:808.6px;height:1px;background:#eeeeee;"></div>
<div class="b" style="left:2px;top:724.1px;width:808.6px;height:1px;background:#eeeeee;"></div>
<div class="b" style="left:2px;top:744.9px;width:808.6px;height:1px;background:#eeeeee;"></div>
<div class="b" style="left:75px;top:641.2px;width:1px;height:121.8px;background:#ececec;"></div>
<span class="t" style="font-family:'DejaVu Sans Condensed','DejaVu Sans',sans-serif;font-size:13.53px;color:#111;left:10.2px;top:644.5px;letter-spacing:-0.12px;">14:43:24</span>
<span class="t" style="font-family:'DejaVu Sans Condensed','DejaVu Sans',sans-serif;font-size:13.25px;color:#111;left:80.8px;top:645.5px;letter-spacing:0.04px;">Recallibration... </span>
<span class="t" style="font-family:'DejaVu Sans Condensed','DejaVu Sans',sans-serif;font-size:12.32px;color:#111;left:179px;top:646.5px;letter-spacing:-0.72px;">OK</span>
<span class="t" style="font-family:'DejaVu Sans Condensed','DejaVu Sans',sans-serif;font-size:13.53px;color:#111;left:10.2px;top:665.25px;letter-spacing:-0.12px;">14:43:24</span>
<span class="t" style="font-family:'DejaVu Sans Condensed','DejaVu Sans',sans-serif;font-size:13.25px;color:#111;left:81.8px;top:666.25px;letter-spacing:0.02px;">Starting </span>
<span class="t" style="font-family:'DejaVu Sans Condensed','DejaVu Sans',sans-serif;font-size:13.25px;color:#111;left:132.3px;top:666.25px;letter-spacing:0.06px;">Reading, </span>
<span class="t" style="font-family:'DejaVu Sans Condensed','DejaVu Sans',sans-serif;font-size:13.25px;color:#111;left:188.7px;top:666.25px;letter-spacing:-0.04px;">LBA=0..</span>
<span class="t" style="font-family:'DejaVu Sans Condensed','DejaVu Sans',sans-serif;font-size:13.25px;color:#111;left:237.5px;top:666.25px;letter-spacing:-0.22px;">488395054, </span>
<span class="t" style="font-family:'DejaVu Sans Condensed','DejaVu Sans',sans-serif;font-size:13.25px;color:#111;left:309.9px;top:666.25px;letter-spacing:-0.01px;">FULL, </span>
<span class="t" style="font-family:'DejaVu Sans Condensed','DejaVu Sans',sans-serif;font-size:13.25px;color:#111;left:347.3px;top:666.25px;letter-spacing:-0.14px;">sequential </span>
<span class="t" style="font-family:'DejaVu Sans Condensed','DejaVu Sans',sans-serif;font-size:13.25px;color:#111;left:411.7px;top:666.25px;letter-spacing:0.03px;">access, </span>
<span class="t" style="font-family:'DejaVu Sans Condensed','DejaVu Sans',sans-serif;font-size:13.25px;color:#111;left:459.7px;top:666.25px;letter-spacing:-0.1px;">timeout </span>
<span class="t" style="font-family:'DejaVu Sans Condensed','DejaVu Sans',sans-serif;font-size:13.25px;color:#111;left:508.1px;top:666.25px;letter-spacing:-0.09px;">10000ms</span>
<span class="t" style="font-family:'DejaVu Sans Condensed','DejaVu Sans',sans-serif;font-size:13.53px;color:#111;left:10.2px;top:686px;letter-spacing:0.02px;">14:50:42</span>
<span class="t" style="font-family:'DejaVu Sans Condensed','DejaVu Sans',sans-serif;font-size:13.25px;color:#ff1010;left:80.8px;top:687px;letter-spacing:-0.27px;">Block </span>
<span class="t" style="font-family:'DejaVu Sans Condensed','DejaVu Sans',sans-serif;font-size:13.25px;color:#ff1010;left:116.2px;top:687px;letter-spacing:-0.04px;">start </span>
<span class="t" style="font-family:'DejaVu Sans Condensed','DejaVu Sans',sans-serif;font-size:13.25px;color:#ff1010;left:147.5px;top:687px;letter-spacing:-0.13px;">at 28426240 </span>
<span class="t" style="font-family:'DejaVu Sans Condensed','DejaVu Sans',sans-serif;font-size:13.25px;color:#ff1010;left:225.1px;top:687px;letter-spacing:-0.03px;">(15 GB) </span>
<span class="t" style="font-family:'DejaVu Sans Condensed','DejaVu Sans',sans-serif;font-size:13.25px;color:#ff1010;left:274.3px;top:687px;letter-spacing:0.12px;">Read </span>
<span class="t" style="font-family:'DejaVu Sans Condensed','DejaVu Sans',sans-serif;font-size:13.25px;color:#ff1010;left:309.6px;top:687px;letter-spacing:0.31px;">error: UNCR </span>
<span class="t" style="font-family:'DejaVu Sans Condensed','DejaVu Sans',sans-serif;font-size:13.25px;color:#ff1010;left:386.7px;top:687px;letter-spacing:-0.28px;">&quot;Ошибка </span>
<span class="t" style="font-family:'DejaVu Sans Condensed','DejaVu Sans',sans-serif;font-size:13.25px;color:#ff1010;left:443.6px;top:687px;letter-spacing:-0.26px;">в данных </span>
<span class="t" style="font-family:'DejaVu Sans Condensed','DejaVu Sans',sans-serif;font-size:13.25px;color:#ff1010;left:503.5px;top:687px;letter-spacing:0.44px;">(CRC)&quot;</span>
<span class="t" style="font-family:'DejaVu Sans Condensed','DejaVu Sans',sans-serif;font-size:13.53px;color:#111;left:10.2px;top:706.75px;letter-spacing:0.02px;">16:48:27</span>
<span class="t" style="font-family:'DejaVu Sans Condensed','DejaVu Sans',sans-serif;font-size:13.25px;color:#111;left:81.8px;top:707.75px;letter-spacing:1.98px;">*** </span>
<span class="t" style="font-family:'DejaVu Sans Condensed','DejaVu Sans',sans-serif;font-size:13.25px;color:#111;left:111.4px;top:707.75px;letter-spacing:0.11px;">Scan </span>
<span class="t" style="font-family:'DejaVu Sans Condensed','DejaVu Sans',sans-serif;font-size:13.25px;color:#111;left:143.7px;top:707.75px;letter-spacing:0.15px;">results: </span>
<span class="t" style="font-family:'DejaVu Sans Condensed','DejaVu Sans',sans-serif;font-size:13.25px;color:#111;left:193.8px;top:707.75px;letter-spacing:0.09px;">Warnings </span>
<span class="t" style="font-family:'DejaVu Sans Condensed','DejaVu Sans',sans-serif;font-size:13.25px;color:#111;left:253.5px;top:707.75px;letter-spacing:0.36px;">- 0, errors </span>
<span class="t" style="font-family:'DejaVu Sans Condensed','DejaVu Sans',sans-serif;font-size:13.25px;color:#111;left:319.8px;top:707.75px;letter-spacing:0.01px;">- 1. Last block </span>
<span class="t" style="font-family:'DejaVu Sans Condensed','DejaVu Sans',sans-serif;font-size:13.25px;color:#111;left:407.2px;top:707.75px;letter-spacing:0.08px;">at </span>
<span class="t" style="font-family:'DejaVu Sans Condensed','DejaVu Sans',sans-serif;font-size:13.25px;color:#111;left:423.2px;top:707.75px;letter-spacing:-0.14px;">488395054 </span>
<span class="t" style="font-family:'DejaVu Sans Condensed','DejaVu Sans',sans-serif;font-size:13.25px;color:#111;left:492.8px;top:707.75px;letter-spacing:-0.08px;">(250 </span>
<span class="t" style="font-family:'DejaVu Sans Condensed','DejaVu Sans',sans-serif;font-size:13.25px;color:#111;left:524.6px;top:707.75px;letter-spacing:-0.07px;">GB), </span>
<span class="t" style="font-family:'DejaVu Sans Condensed','DejaVu Sans',sans-serif;font-size:13.25px;color:#111;left:553.9px;top:707.75px;letter-spacing:-0.04px;">time </span>
<span class="t" style="font-family:'DejaVu Sans Condensed','DejaVu Sans',sans-serif;font-size:13.25px;color:#111;left:584.4px;top:707.75px;letter-spacing:0.03px;">2 hours </span>
<span class="t" style="font-family:'DejaVu Sans Condensed','DejaVu Sans',sans-serif;font-size:13.25px;color:#111;left:633.3px;top:707.75px;letter-spacing:-0.11px;">5 minutes </span>
<span class="t" style="font-family:'DejaVu Sans Condensed','DejaVu Sans',sans-serif;font-size:13.25px;color:#111;left:695.6px;top:707.75px;letter-spacing:-0.06px;">4 seconds.</span>
<span class="t" style="font-family:'DejaVu Sans Condensed','DejaVu Sans',sans-serif;font-size:13.53px;color:#111;left:10.2px;top:727.5px;letter-spacing:0.02px;">16:48:28</span>
<span class="t" style="font-family:'DejaVu Sans Condensed','DejaVu Sans',sans-serif;font-size:13.25px;color:#1a1aff;left:81.8px;top:728.5px;letter-spacing:0.25px;">Speed: </span>
<span class="t" style="font-family:'DejaVu Sans Condensed','DejaVu Sans',sans-serif;font-size:13.25px;color:#1a1aff;left:127.7px;top:728.5px;letter-spacing:-0.04px;">Maximum </span>
<span class="t" style="font-family:'DejaVu Sans Condensed','DejaVu Sans',sans-serif;font-size:13.25px;color:#1a1aff;left:190.9px;top:728.5px;letter-spacing:0.09px;">36 MB/s. </span>
<span class="t" style="font-family:'DejaVu Sans Condensed','DejaVu Sans',sans-serif;font-size:13.25px;color:#1a1aff;left:246.9px;top:728.5px;letter-spacing:0.16px;">Average </span>
<span class="t" style="font-family:'DejaVu Sans Condensed','DejaVu Sans',sans-serif;font-size:13.25px;color:#1a1aff;left:299.8px;top:728.5px;letter-spacing:0.07px;">18 MB/s. </span>
<span class="t" style="font-family:'DejaVu Sans Condensed','DejaVu Sans',sans-serif;font-size:13.25px;color:#1a1aff;left:355.6px;top:728.5px;letter-spacing:-0.09px;">Minimum </span>
<span class="t" style="font-family:'DejaVu Sans Condensed','DejaVu Sans',sans-serif;font-size:13.25px;color:#1a1aff;left:414.9px;top:728.5px;letter-spacing:0.26px;">0 MB/s. </span>
<span class="t" style="font-family:'DejaVu Sans Condensed','DejaVu Sans',sans-serif;font-size:13.25px;color:#1a1aff;left:464.6px;top:728.5px;letter-spacing:-0.26px;">496 points.</span>
<div class="b" style="left:810.6px;top:641.2px;width:17px;height:121.8px;background:#f0f0f0;"></div>
<svg class="b" style="left:810.6px;top:643px;" width="17" height="17" viewBox="0 0 17 17"><path d="M4.700 10.800l3.800-3.800 3.800 3.800" stroke="#505050" stroke-width="1.700" fill="none"/></svg>
<div class="b" style="left:811.4px;top:720.7px;width:15.2px;height:30.5px;background:#cdcdcd;"></div>
<div class="b" style="left:829.6px;top:640.2px;width:70.4px;height:122.8px;background:#a7a7a7;border-left:1.200px solid #858585"></div>
<div class="b" style="left:839.2px;top:649.2px;width:13.6px;height:13.5px;background:#fff;border:1px solid #333"></div>
<svg class="b" style="left:839.2px;top:649.2px;" width="13.5" height="13.5" viewBox="0 0 13.5 13.5"><path d="M2.800 7l2.900 2.900 5.300-6.200" stroke="#222" stroke-width="1.300" fill="none"/></svg>
<span class="t" style="font-family:'DejaVu Sans Condensed','DejaVu Sans',sans-serif;font-size:11.62px;color:#111;left:858.3px;top:650px;letter-spacing:-0.01px;">Звук</span>
<div class="b" style="left:839.2px;top:673.1px;width:13.6px;height:13.5px;background:#fff;border:1px solid #333"></div>
<svg class="b" style="left:839.2px;top:673.1px;" width="13.5" height="13.5" viewBox="0 0 13.5 13.5"><path d="M2.800 7l2.900 2.900 5.300-6.200" stroke="#222" stroke-width="1.300" fill="none"/></svg>
<span class="t" style="font-family:'DejaVu Sans Condensed','DejaVu Sans',sans-serif;font-size:12.4px;color:#111;left:857.3px;top:672.4px;">Hints</span>
</body></html>
